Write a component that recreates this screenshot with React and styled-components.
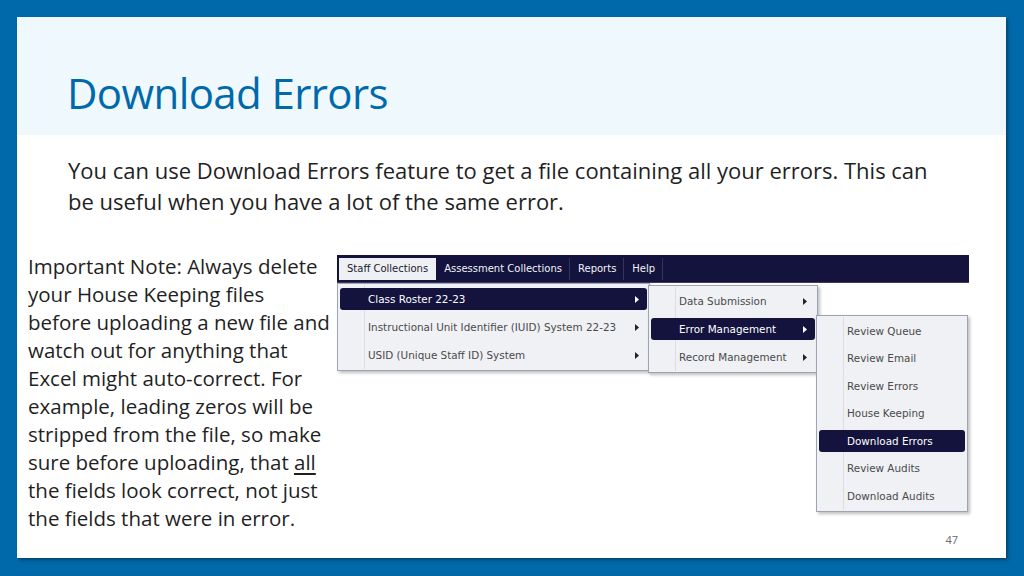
import React from "react";
import styled, { createGlobalStyle } from "styled-components";

const GlobalStyle = createGlobalStyle`
  html, body {
    margin: 0;
    padding: 0;
    background: #0069aa;
  }
  * {
    box-sizing: border-box;
  }
`;

const topItems = [
  { label: "Staff Collections", active: true },
  { label: "Assessment Collections" },
  { label: "Reports" },
  { label: "Help" },
];

const firstMenu = [
  { label: "Class Roster 22-23", selected: true, arrow: true },
  { label: "Instructional Unit Identifier (IUID) System 22-23", arrow: true },
  { label: "USID (Unique Staff ID) System", arrow: true },
];

const secondMenu = [
  { label: "Data Submission", arrow: true },
  { label: "Error Management", selected: true, arrow: true },
  { label: "Record Management", arrow: true },
];

const thirdMenu = [
  { label: "Review Queue" },
  { label: "Review Email" },
  { label: "Review Errors" },
  { label: "House Keeping" },
  { label: "Download Errors", selected: true },
  { label: "Review Audits" },
  { label: "Download Audits" },
];

function Arrow({ light }) {
  return (
    <ArrowIcon viewBox="0 0 4 7" $light={light}>
      <path d="M0 0 L4 3.5 L0 7 Z" />
    </ArrowIcon>
  );
}

function Menu({ items, rowHeight, ...rest }) {
  return (
    <Dropdown {...rest}>
      <Gutter />
      {items.map((item) => (
        <MenuRow key={item.label} $height={rowHeight}>
          <MenuLabel $selected={item.selected}>
            <span>{item.label}</span>
            {item.arrow && <Arrow light={item.selected} />}
          </MenuLabel>
        </MenuRow>
      ))}
    </Dropdown>
  );
}

export default function App() {
  return (
    <>
      <GlobalStyle />
      <Slide>
        <Card>
          <Header>
            <Title>Download Errors</Title>
          </Header>

          <Intro>
            You can use Download Errors feature to get a file containing all your errors. This can
            <br />
            be useful when you have a lot of the same error.
          </Intro>

          <Content>
            <Note>
              Important Note: Always delete
              <br />
              your House Keeping files
              <br />
              before uploading a new file and
              <br />
              watch out for anything that
              <br />
              Excel might auto-correct. For
              <br />
              example, leading zeros will be
              <br />
              stripped from the file, so make
              <br />
              sure before uploading, that <u>all</u>
              <br />
              the fields look correct, not just
              <br />
              the fields that were in error.
            </Note>

            <Screenshot>
              <MenuBar>
                {topItems.map((item) => (
                  <TopItem key={item.label} $active={item.active}>
                    {item.label}
                  </TopItem>
                ))}
              </MenuBar>

              <Menu
                items={firstMenu}
                rowHeight={28}
                style={{ left: 0, top: 28, width: 313 }}
              />
              <Menu
                items={secondMenu}
                rowHeight={28}
                style={{ left: 311, top: 30, width: 170 }}
              />
              <Menu
                items={thirdMenu}
                rowHeight={27.5}
                style={{ left: 479, top: 60, width: 152 }}
              />
            </Screenshot>
          </Content>

          <Footer>47</Footer>
        </Card>
      </Slide>
    </>
  );
}

const Slide = styled.div`
  width: 1024px;
  height: 576px;
  padding: 17px 18px 18px 17px;
  background: #0069aa;
  overflow: hidden;
`;

const Card = styled.div`
  width: 989px;
  height: 541px;
  background: #ffffff;
  display: flex;
  flex-direction: column;
  box-shadow: 2px 2px 3px rgba(0, 0, 0, 0.35);
`;

const Header = styled.div`
  height: 118px;
  flex-shrink: 0;
  background: #eff8fd;
  padding: 51px 0 0 50px;
`;

const Title = styled.h1`
  margin: 0;
  font-family: "Open Sans", "Noto Sans", sans-serif;
  font-weight: 400;
  font-size: 42px;
  line-height: 50px;
  letter-spacing: -0.6px;
  color: #0069aa;
`;

const Intro = styled.p`
  margin: 20px 0 0 51px;
  font-family: "Open Sans", "Noto Sans", sans-serif;
  font-size: 22px;
  line-height: 31px;
  letter-spacing: 0;
  color: #1f1f1f;
  white-space: nowrap;
`;

const Content = styled.div`
  display: flex;
  margin-top: 35px;
`;

const Note = styled.p`
  width: 320px;
  flex-shrink: 0;
  margin: 0;
  padding-left: 11px;
  font-family: "Open Sans", "Noto Sans", sans-serif;
  font-size: 20.5px;
  line-height: 28px;
  letter-spacing: 0;
  color: #1f1f1f;
  white-space: nowrap;

  u {
    text-underline-offset: 3px;
  }
`;

const Screenshot = styled.div`
  position: relative;
  width: 632px;
  height: 262px;
  margin-top: 3px;
  font-family: "DejaVu Sans", Verdana, sans-serif;
  font-size: 10.4px;
`;

const MenuBar = styled.div`
  height: 28px;
  background: #13133d;
  display: flex;
  align-items: center;
  padding-left: 2px;
  border-bottom: 1px solid #3a3a62;
  font-size: 10px;
`;

const TopItem = styled.div`
  height: 22px;
  display: flex;
  align-items: center;
  padding: 0 ${(p) => (p.$active ? 8 : 7)}px;
  margin-right: 1px;
  color: ${(p) => (p.$active ? "#1a1a2e" : "#f2f2f6")};
  background: ${(p) => (p.$active ? "#eef0f4" : "transparent")};
  border-right: ${(p) => (p.$active ? "none" : "1px solid #34345c")};
  white-space: nowrap;
`;

const Dropdown = styled.div`
  position: absolute;
  padding: 1px 2px;
  background: #f0f1f5;
  border: 1px solid #9ea3b1;
  box-shadow: 2px 2px 3px rgba(0, 0, 0, 0.25);
`;

const Gutter = styled.div`
  position: absolute;
  top: 1px;
  bottom: 1px;
  left: 26px;
  width: 1px;
  background: #dcdee5;
`;

const MenuRow = styled.div`
  position: relative;
  height: ${(p) => p.$height}px;
  display: flex;
  align-items: center;
`;

const MenuLabel = styled.div`
  flex: 1;
  height: 22px;
  display: flex;
  align-items: center;
  justify-content: space-between;
  padding: 0 8px 0 28px;
  border-radius: 3px;
  white-space: nowrap;
  color: ${(p) => (p.$selected ? "#ffffff" : "#4a4a4a")};
  background: ${(p) => (p.$selected ? "#13133d" : "transparent")};
`;

const ArrowIcon = styled.svg`
  width: 4px;
  height: 7px;
  fill: ${(p) => (p.$light ? "#ffffff" : "#222222")};
`;

const Footer = styled.div`
  margin-top: auto;
  padding: 0 48px 29px 0;
  text-align: right;
  font-family: "Open Sans", "Noto Sans", sans-serif;
  font-size: 11px;
  color: #6b6b6b;
`;
